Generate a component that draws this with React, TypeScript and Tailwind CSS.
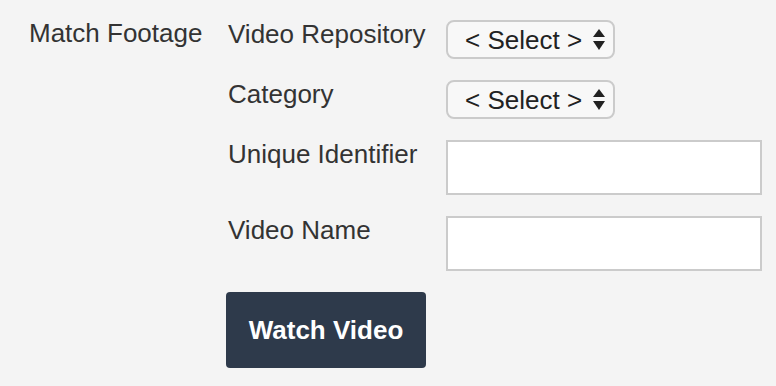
import React from 'react';

const font = { fontFamily: '"Liberation Sans", Arial, Helvetica, sans-serif' };

function SelectBox() {
    return (
        <div className="flex items-center w-[169px] h-[39px] border-2 border-[#cbcbcb] rounded-[8px] bg-[#f8f8f8] pl-[17px] text-[26px] text-[#222]">
            <span className="leading-none">&lt; Select &gt;</span>
            <svg width="12" height="21" viewBox="0 0 12 21" className="shrink-0 ml-[11px]">
                <polygon points="6,0 12,8 0,8" fill="#222" />
                <polygon points="0,12 12,12 6,21" fill="#222" />
            </svg>
        </div>
    );
}

function TextBox() {
    return <input type="text" className="w-[316px] h-[55px] border-2 border-[#cbcbcb] bg-white outline-none" />;
}

export default function App() {
    const rows = [
        { label: 'Video Repository', control: <SelectBox /> },
        { label: 'Category', control: <SelectBox /> },
        { label: 'Unique Identifier', control: <TextBox /> },
        { label: 'Video Name', control: <TextBox /> },
    ];

    return (
        <div style={font} className="w-[776px] h-[386px] bg-[#f4f4f4] text-[#333] flex pt-[20px] pl-[29px]">
            <div className="w-[199px] text-[26px] leading-[30px] -mt-[2px]">Match Footage</div>
            <div className="flex flex-col gap-[21px]">
                {rows.map((row) => (
                    <div key={row.label} className="flex items-start">
                        <div className="w-[218px] text-[26px] leading-[30px] -mt-[1px]">{row.label}</div>
                        {row.control}
                    </div>
                ))}
                <button className="w-[200px] h-[76px] bg-[#2e3a4b] rounded-[4px] text-white font-bold text-[26px] -ml-[2px]">
                    Watch Video
                </button>
            </div>
        </div>
    );
}
